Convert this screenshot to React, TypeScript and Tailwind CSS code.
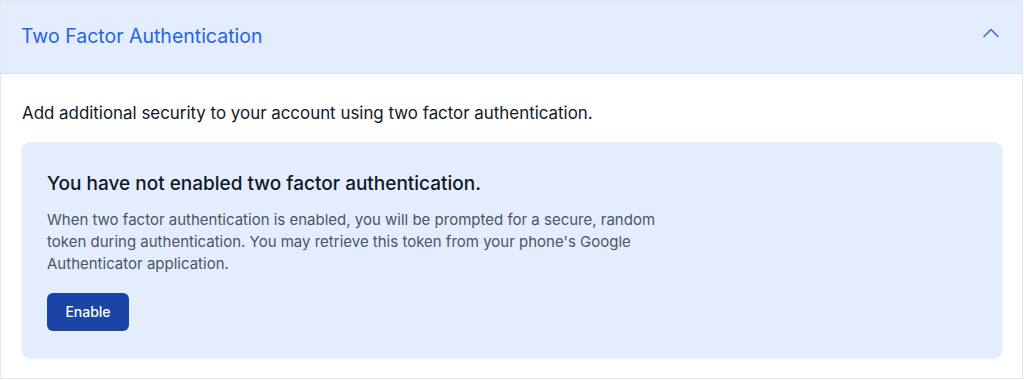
import React from "react";
import { ChevronUp } from "lucide-react";

export default function App() {
  return (
    <div className="w-[1024px] h-[380px] bg-white font-['Inter',sans-serif]">
      <div className="h-[379px] w-[1023px] border border-[#e3e6eb] flex flex-col">
        {/* Accordion header */}
        <div className="h-[73px] shrink-0 flex items-center justify-between px-5 bg-[#e3edfd] border-b border-[#d3e0f5]">
          <h2 className="text-[19.5px] text-[#2563eb] font-normal">Two Factor Authentication</h2>
          <ChevronUp className="w-7 h-7 text-[#3b6fe6] -mr-[3px] mb-2" strokeWidth={1.5} />
        </div>

        {/* Body */}
        <div className="pl-[21px] pr-5 pt-[27px] pb-5">
          <p className="text-[16.9px] leading-6 text-[#111827]">
            Add additional security to your account using two factor authentication.
          </p>

          <div className="mt-[17px] rounded-lg bg-[#e3edfd] shadow-sm px-[25px] pt-7 pb-[26px]">
            <h3 className="text-[19px] leading-7 font-medium text-[#111827]">
              You have not enabled two factor authentication.
            </h3>
            <p className="mt-[11px] max-w-[640px] text-[15px] leading-[22px] text-[#4b5563]">
              When two factor authentication is enabled, you will be prompted for a secure, random
              token during authentication. You may retrieve this token from your phone's Google
              Authenticator application.
            </p>
            <button className="mt-[18px] h-[38px] w-[82px] flex items-center justify-center rounded-md bg-[#1c43a6] text-white text-sm font-medium">
              Enable
            </button>
          </div>
        </div>
      </div>
    </div>
  );
}
